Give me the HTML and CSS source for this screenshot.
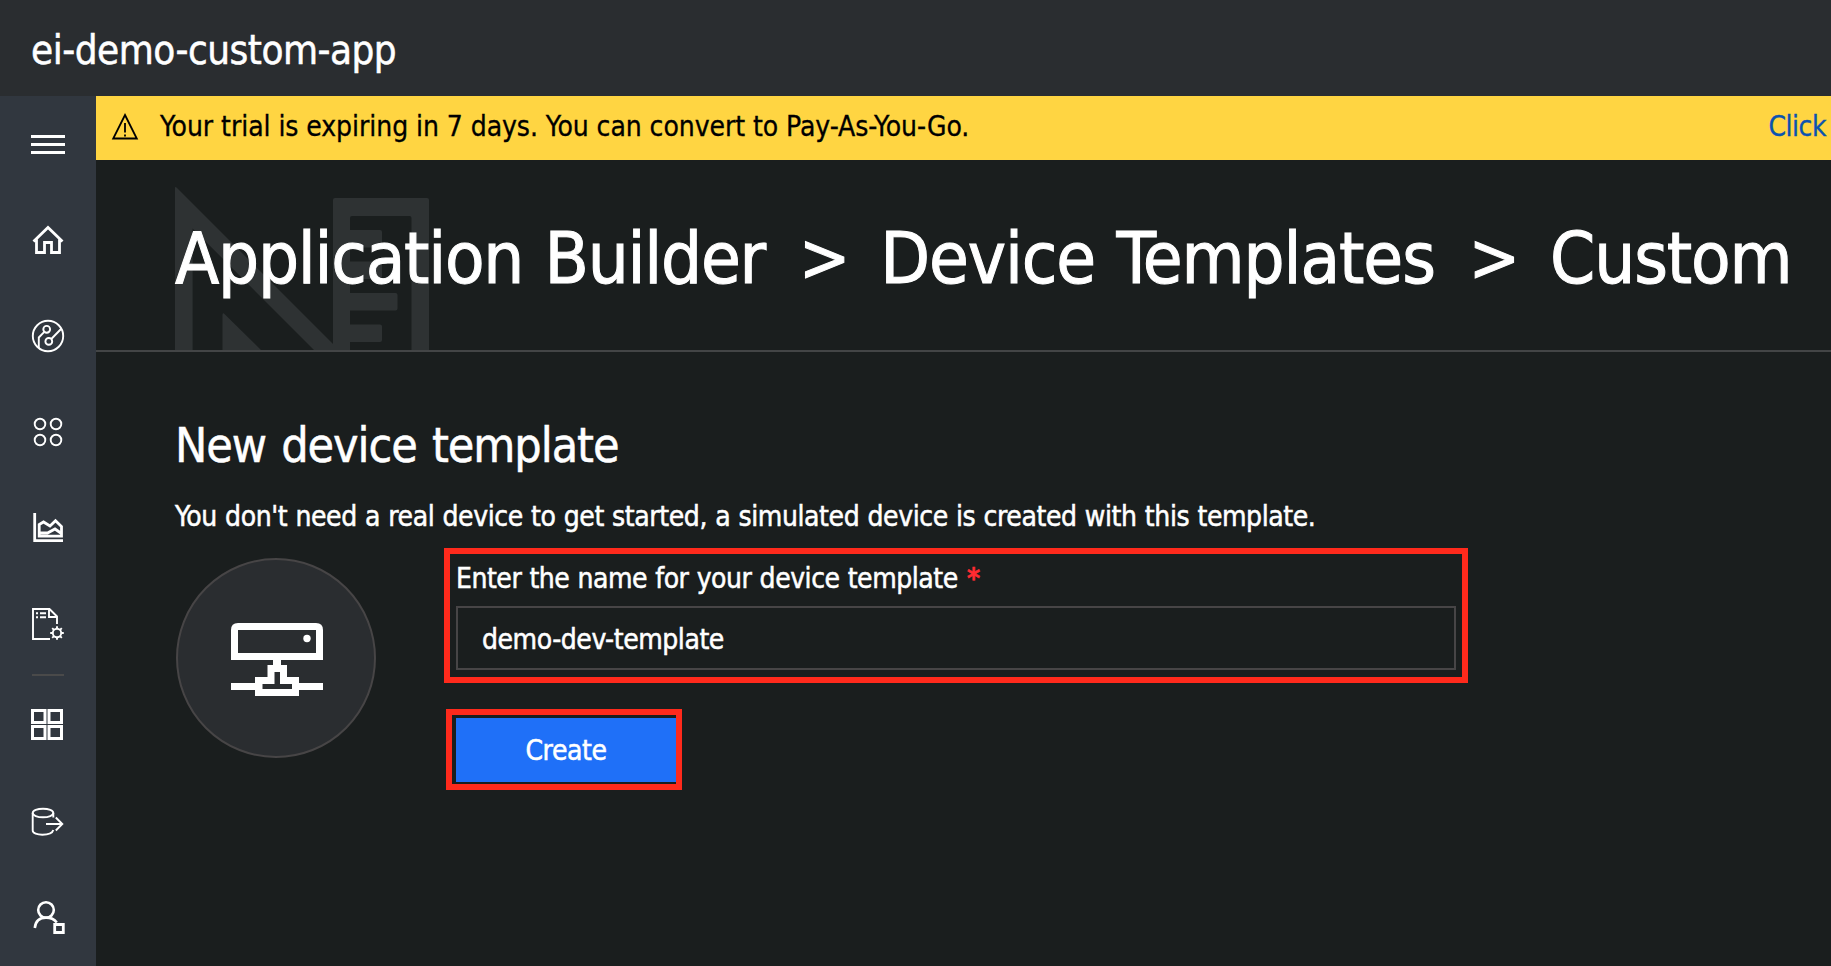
FILE: index.html
```html
<!DOCTYPE html>
<html lang="en">
<head>
<meta charset="utf-8">
<title>ei-demo-custom-app</title>
<link rel="stylesheet" href="styles.css">
</head>
<body>
<header class="topbar"><span class="app-name">ei-demo-custom-app</span></header>
<div class="shell">
  <nav class="sidebar">
    <a class="nav-item"><svg viewBox="0 96 96 96"><path class="thick" d="M31 136.500H65M31 144.500H65M31 152.500H65"/></svg></a>
    <a class="nav-item"><svg viewBox="0 192 96 96"><path class="thick" d="M33.500 241.500L48 227.500L62.500 241.500M36.500 239.500V252.500H44.500V242.500H51.500V252.500H59.500V239.500"/></svg></a>
    <a class="nav-item"><svg viewBox="0 288 96 96"><circle cx="48" cy="336" r="15.200"/><circle cx="46.700" cy="329.300" r="3.400"/><circle cx="48.800" cy="341.400" r="3.400"/><path d="M61.500 328.500L51.300 339M44.300 331.800L38.800 337.500V348"/></svg></a>
    <a class="nav-item"><svg viewBox="0 384 96 96"><circle cx="40" cy="424" r="5.300"/><circle cx="56" cy="424" r="5.300"/><circle cx="40" cy="440" r="5.300"/><circle cx="56" cy="440" r="5.300"/></svg></a>
    <a class="nav-item"><svg viewBox="0 480 96 96"><path class="thick" d="M34.700 513V540.600H63M39.200 536.200V524.500L43.500 522L50 526L55.500 520.800L61.500 526.500V536.200ZM39.200 533H47.500L55 529L61.500 533.500"/></svg></a>
    <a class="nav-item"><svg viewBox="0 576 96 96"><path d="M50 639H33V609H49.500L57 616.500V624M49 609V617H57M36 613.200H38M40 613.200H46M36 617.200H38M40 617.200H46"/><circle cx="57" cy="633" r="4.200"/><path d="M57 629V626.200M57 637V639.800M53 633H50.200M61 633H63.800M54.200 630.200L52.200 628.200M59.800 635.800L61.800 637.800M59.800 630.200L61.800 628.200M54.200 635.800L52.200 637.800"/></svg></a>
    <div class="nav-divider"></div>
    <a class="nav-item"><svg viewBox="0 677 96 96"><path class="grid" d="M32.500 710.500H45V722.500H32.500ZM49 710.500H61.500V722.500H49ZM32.500 726.500H45V738.500H32.500ZM49 726.500H61.500V738.500H49Z"/></svg></a>
    <a class="nav-item"><svg viewBox="0 773 96 96"><ellipse cx="43" cy="813" rx="10.300" ry="4.300"/><path d="M32.700 813V830.500C32.700 836 51.500 836.500 53.300 830M53.300 813V817.500M46 824H62M55.800 817.500L62.300 824L55.800 830.500"/></svg></a>
    <a class="nav-item"><svg viewBox="0 869 96 96"><circle class="med" cx="46" cy="910" r="7.800"/><path class="med" d="M34.800 928C35.500 921 40 917.600 46 917.600C51 917.600 54.500 919.500 56.800 922.500"/><path class="thick" d="M54.700 924.500H63.300V932.500H54.700Z"/></svg></a>
  </nav>
  <main class="main">
    <div class="banner">
      <svg class="warn" viewBox="0 0 28 28"><path d="M14 3L25.800 26.500H2.200Z"/><path d="M14 11V20.500M14 22.500V24.500"/></svg>
      <span class="banner-text">Your trial is expiring in 7 days. You can convert to Pay-As-You-Go.</span>
      <a class="banner-link">Click</a>
    </div>
    <div class="hero">
      <svg class="watermark" viewBox="175 187 256 163"><path fill-rule="evenodd" d="M175 350V188Q175 186 177 188L333 344V200Q333 198 335 198H427Q429 198 429 200V350H411.500V218Q411.500 216 409.500 216H352Q350 216 350 218V230H380Q382 230 382 232V245.500Q382 247.500 380 247.500H350V261.500H380Q382 261.500 382 263.500V277Q382 279 380 279H350V293H395.500Q397.500 293 397.500 295V308.500Q397.500 310.500 395.500 310.500H350V324.500H380Q382 324.500 382 326.500V340Q382 342 380 342H350V350H314L192.600 228.500V350ZM222.500 350V315Q222.500 312 225 314.500L261 350Z"/></svg>
      <h1 class="crumbs"><span class="crumb-first">Application Builder</span><span class="sep">&gt;</span><span>Device Templates</span><span class="sep">&gt;</span><span>Custom</span></h1>
    </div>
    <section class="content">
      <h2 class="heading">New device template</h2>
      <p class="sub">You don't need a real device to get started, a simulated device is created with this template.</p>
      <div class="row">
        <div class="avatar"><svg viewBox="176 558 200 200"><path d="M234.500 656.500V630Q234.500 626.500 238 626.500H316Q319.500 626.500 319.500 630V656.500Z"/><path class="solid" fill-rule="evenodd" d="M273 658H281V665H287V677H299V683H323V690H299V696H255V690H231V683H255V677H267.500V665H273ZM274.500 672V684H262.500V689H292V684H280V672Z"/><circle class="solid" cx="307" cy="638.500" r="3.700"/></svg></div>
        <div class="form">
          <div class="mark mark-field">
            <label class="label">Enter the name for your device template <b class="req">*</b></label>
            <div class="input">demo-dev-template</div>
          </div>
          <div class="mark mark-button"><div class="button">Create</div></div>
        </div>
      </div>
    </section>
  </main>
</div>
</body>
</html>
```
FILE: styles.css
```css
* { box-sizing: border-box; }
body {
  margin: 0;
  width: 1831px;
  height: 966px;
  overflow: hidden;
  background: #1a1e1e;
  color: #fff;
  font-family: "DejaVu Sans Condensed", "DejaVu Sans", sans-serif;
  font-stretch: condensed;
  font-size: 28px;
  white-space: nowrap;
  -webkit-text-stroke: 0.5px currentColor;
}
h1, h2, p { margin: 0; font-weight: normal; }
.topbar { height: 96px; padding: 26px 0 0 31px; background: #2a2d30; font-size: 40px; line-height: 48px; letter-spacing: -0.5px; }
.shell { display: flex; height: 870px; }
.sidebar { width: 96px; flex: none; background: #31373f; }
.nav-item { display: block; height: 96px; }
.nav-item svg { display: block; width: 96px; height: 96px; fill: none; stroke: #fff; stroke-width: 1.9; }
.nav-item .thick { stroke-width: 2.8; }
.nav-item .med { stroke-width: 2.6; }
.nav-item .grid { stroke-width: 3; }
.nav-divider { width: 32px; height: 2px; margin: 2px 32px 1px; background: #4a4a4a; }
.main { flex: 1; min-width: 0; }
.banner { display: flex; align-items: center; height: 64px; padding: 0 5px 4px 15px; background: #ffd542; color: #000; letter-spacing: -0.06px; -webkit-text-stroke-width: 0.3px; }
.warn { width: 28px; height: 28px; margin-right: 21px; fill: none; stroke: #000; stroke-width: 1.8; }
.banner-link { margin-left: auto; color: #0b53b0; letter-spacing: -0.5px; }
.hero { display: grid; height: 192px; border-bottom: 2px solid #434546; padding-left: 79px; }
.watermark { grid-area: 1 / 1; width: 256px; height: 163px; align-self: end; fill: #2e3233; }
.crumbs { grid-area: 1 / 1; display: flex; padding-top: 54px; font-size: 72px; line-height: 88px; letter-spacing: -1.1px; word-spacing: 2px; position: relative; -webkit-text-stroke-width: 1px; }
.crumb-first { letter-spacing: -1.25px; }
.sep { margin: 0 30px 0 34px; font-size: 68px; letter-spacing: 0; }
.content { padding: 64px 0 0 79px; }
.heading { font-size: 48px; line-height: 58px; letter-spacing: -1.05px; word-spacing: 2.5px; }
.sub { margin-top: 26px; line-height: 34px; letter-spacing: -0.41px; word-spacing: 0.65px; }
.row { display: flex; margin-top: 14px; }
.avatar { width: 200px; height: 200px; margin: 10px 68px 0 1px; border: 2px solid #474546; border-radius: 50%; background: #2a2d30; }
.avatar svg { display: block; width: 200px; height: 200px; margin: -2px; fill: none; stroke: #fff; stroke-width: 7; }
.avatar .solid { fill: #fff; stroke: none; }
.mark { border: 6px solid #ff2a1c; }
.mark-field { width: 1024px; height: 135px; padding: 8px 6px 0; }
.label { display: block; line-height: 34px; letter-spacing: -0.47px; word-spacing: 0.65px; }
.req { margin-left: 1px; color: #ff2b31; }
.input { height: 64px; margin-top: 10px; padding: 2px 0 0 24px; border: 2px solid #474546; line-height: 60px; letter-spacing: -0.45px; }
.mark-button { width: 236px; height: 81px; margin: 26px 0 0 2px; padding: 3px 0 0 4px; }
.button { height: 64px; background: #1f70f8; text-align: center; line-height: 65px; letter-spacing: -0.4px; }
```
